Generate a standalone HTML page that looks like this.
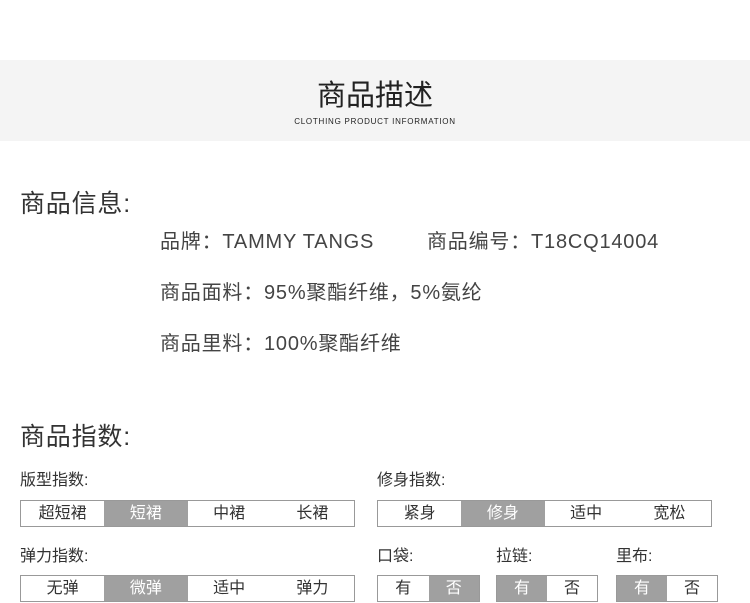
<!DOCTYPE html>
<html><head><meta charset="utf-8"><style>
*{margin:0;padding:0;box-sizing:border-box}
body{width:750px;height:603px;background:#fff;position:relative;overflow:hidden;font-family:"Liberation Sans","Noto Sans CJK SC",sans-serif;color:#333}
.a{position:absolute;white-space:nowrap}
.i{font-size:20px;letter-spacing:0.8px;color:#444}
.band{position:absolute;left:0;top:60px;width:750px;height:81px;background:#f4f4f4}
.box{position:absolute;height:27px;border:1px solid #999;display:flex}
.box div{flex:1;text-align:center;font-size:16px;line-height:25px;color:#333}
.box div.on{background:#a0a0a0;color:#fff}
</style></head><body>
<div class="band"></div>
<div class="a" style="left:0;width:750px;text-align:center;top:72px;font-size:29px;color:#222">商品描述</div>
<div class="a" style="left:0;width:750px;text-align:center;top:117px;font-size:8px;color:#222;letter-spacing:0.75px">CLOTHING PRODUCT INFORMATION</div>

<div class="a" style="left:20px;top:184px;font-size:25px;letter-spacing:0.8px">商品信息:</div>
<div class="a i" style="left:160px;top:225px">品牌：TAMMY TANGS</div>
<div class="a i" style="left:427px;top:225px">商品编号：T18CQ14004</div>
<div class="a i" style="left:160px;top:276px">商品面料：95%聚酯纤维，5%氨纶</div>
<div class="a i" style="left:160px;top:327px">商品里料：100%聚酯纤维</div>

<div class="a" style="left:20px;top:417px;font-size:25px;letter-spacing:0.8px">商品指数:</div>
<div class="a" style="left:20px;top:466px;font-size:16px">版型指数:</div>
<div class="a" style="left:377px;top:466px;font-size:16px">修身指数:</div>
<div class="box" style="left:20px;top:500px;width:335px"><div>超短裙</div><div class="on">短裙</div><div>中裙</div><div>长裙</div></div>
<div class="box" style="left:377px;top:500px;width:335px"><div>紧身</div><div class="on">修身</div><div>适中</div><div>宽松</div></div>
<div class="a" style="left:20px;top:542px;font-size:16px">弹力指数:</div>
<div class="a" style="left:377px;top:542px;font-size:16px">口袋:</div>
<div class="a" style="left:496px;top:542px;font-size:16px">拉链:</div>
<div class="a" style="left:616px;top:542px;font-size:16px">里布:</div>
<div class="box" style="left:20px;top:575px;width:335px"><div>无弹</div><div class="on">微弹</div><div>适中</div><div>弹力</div></div>
<div class="box" style="left:377px;top:575px;width:103px"><div>有</div><div class="on">否</div></div>
<div class="box" style="left:496px;top:575px;width:102px"><div class="on">有</div><div>否</div></div>
<div class="box" style="left:616px;top:575px;width:102px"><div class="on">有</div><div>否</div></div>
</body></html>
